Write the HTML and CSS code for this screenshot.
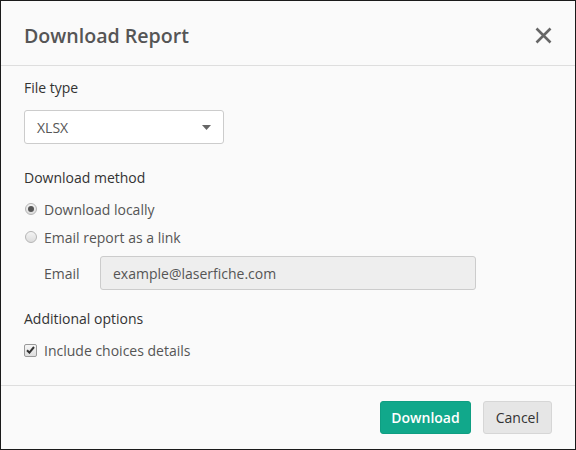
FILE: index.html
```html
<!DOCTYPE html>
<html>
<head>
<meta charset="utf-8">
<link rel="stylesheet" href="styles.css">
</head>
<body>
<div class="dialog">
  <div class="header">
    <h1 class="title">Download Report</h1>
    <svg class="close" width="17" height="17" viewBox="0 0 17 17"><path d="M1.5 1.5 L15.5 15.5 M15.5 1.5 L1.5 15.5" stroke="#666" stroke-width="2.6" fill="none"/></svg>
  </div>
  <div class="content">
    <div class="label">File type</div>
    <div class="select">
      <span>XLSX</span>
      <svg width="9" height="5" viewBox="0 0 9 5"><path d="M0 0 L9 0 L4.5 5 Z" fill="#666"/></svg>
    </div>
    <div class="label section">Download method</div>
    <div class="option first"><span class="radio checked"></span><span>Download locally</span></div>
    <div class="option"><span class="radio"></span><span>Email report as a link</span></div>
    <div class="email-row">
      <span class="email-label">Email</span>
      <div class="input">example@laserfiche.com</div>
    </div>
    <div class="label section2">Additional options</div>
    <div class="option first"><span class="checkbox"><svg width="9" height="8" viewBox="0 0 9 8"><path d="M1 4.2 L3.4 6.6 L8 1" stroke="#333" stroke-width="2" fill="none"/></svg></span><span>Include choices details</span></div>
  </div>
  <div class="footer">
    <button class="btn primary">Download</button>
    <button class="btn secondary">Cancel</button>
  </div>
</div>
</body>
</html>
```
FILE: styles.css
```css
html, body {
  margin: 0;
  padding: 0;
}
body {
  font-family: "Open Sans", "Liberation Sans", sans-serif;
  background: #fafafa;
}
.dialog {
  width: 576px;
  height: 450px;
  box-sizing: border-box;
  border: 1px solid #1a1a1a;
  background: #fafafa;
  display: flex;
  flex-direction: column;
}
.header {
  height: 65px;
  box-sizing: border-box;
  border-bottom: 1px solid #dedede;
  display: flex;
  align-items: flex-start;
  justify-content: space-between;
  padding: 0 23px 0 23px;
}
.title {
  margin: 21px 0 0 0;
  font-size: 19.6px;
  font-weight: 600;
  color: #555;
  line-height: 28px;
}
.close {
  margin-top: 26px;
}
.content {
  flex: 1;
  padding: 12px 23px 0 23px;
  border-bottom: 1px solid #dedede;
}
.label {
  font-size: 14px;
  line-height: 20px;
  color: #333;
}
.section {
  margin-top: 24px;
}
.section2 {
  margin-top: 19px;
}
.select {
  margin-top: 12px;
  width: 200px;
  height: 34px;
  box-sizing: border-box;
  border: 1px solid #ccc;
  border-radius: 3px;
  background: #fff;
  display: flex;
  align-items: center;
  justify-content: space-between;
  padding: 0 12px 0 12px;
  font-size: 14px;
  color: #555;
}
.option {
  height: 28px;
  display: flex;
  align-items: center;
  font-size: 14px;
  color: #555;
}
.option.first {
  margin-top: 7px;
}
.radio {
  width: 12px;
  height: 12px;
  box-sizing: border-box;
  border-radius: 50%;
  border: 1px solid #b5b5b5;
  background: linear-gradient(#f4f4f4, #dcdcdc);
  margin: 0 7px 0 1px;
  display: flex;
  align-items: center;
  justify-content: center;
}
.radio.checked::after {
  content: "";
  width: 6px;
  height: 6px;
  border-radius: 50%;
  background: #555;
}
.checkbox {
  width: 13px;
  height: 13px;
  box-sizing: border-box;
  border: 1px solid #999;
  border-radius: 2px;
  background: linear-gradient(#f6f6f6, #dedede);
  margin: 0 7px 0 0;
  display: flex;
  align-items: center;
  justify-content: center;
}
.email-row {
  margin-top: 5px;
  display: flex;
  align-items: center;
  padding-left: 20px;
}
.email-label {
  width: 56px;
  font-size: 14px;
  color: #555;
}
.input {
  width: 376px;
  height: 34px;
  box-sizing: border-box;
  border: 1px solid #ccc;
  border-radius: 3px;
  background: #eee;
  display: flex;
  align-items: center;
  padding: 0 12px;
  font-size: 14px;
  color: #555;
}
.footer {
  height: 63px;
  box-sizing: border-box;
  display: flex;
  align-items: center;
  justify-content: flex-end;
  gap: 12px;
  padding: 0 23px 1px 23px;
}
.btn {
  font-family: "Open Sans", "Liberation Sans", sans-serif;
  font-size: 14px;
  height: 33px;
  border-radius: 3px;
  padding: 0 12px;
  cursor: pointer;
}
.primary {
  background: #11a88b;
  border: 1px solid #0f9e82;
  color: #fff;
  font-weight: 600;
  padding: 0 10px;
}
.secondary {
  background: #e6e6e6;
  border: 1px solid #d6d6d6;
  color: #333;
}
```
